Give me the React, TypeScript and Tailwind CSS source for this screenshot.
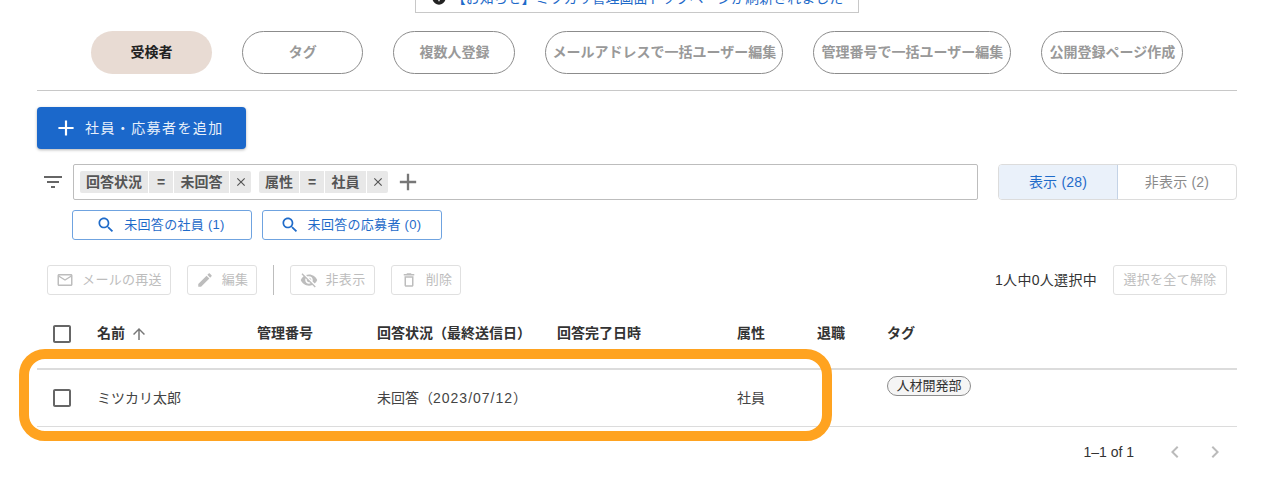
const P = {
  search: "M15.5 14h-.79l-.28-.27C15.41 12.59 16 11.11 16 9.5 16 5.91 13.09 3 9.5 3S3 5.91 3 9.5 5.91 16 9.5 16c1.61 0 3.09-.59 4.23-1.57l.27.28v.79l5 4.99L20.49 19l-4.99-5zm-6 0C7.01 14 5 11.99 5 9.5S7.01 5 9.5 5 14 7.01 14 9.5 11.99 14 9.5 14z",
  mail: "M22 6c0-1.1-.9-2-2-2H4c-1.1 0-2 .9-2 2v12c0 1.1.9 2 2 2h16c1.1 0 2-.9 2-2V6zm-2 0l-8 5-8-5h16zm0 12H4V8l8 5 8-5v10z",
  edit: "M3 17.25V21h3.75L17.81 9.94l-3.75-3.75L3 17.25zM20.71 7.04c.39-.39.39-1.02 0-1.41l-2.34-2.34c-.39-.39-1.02-.39-1.41 0l-1.83 1.83 3.75 3.75 1.83-1.83z",
  eyeOff: "M12 7c2.76 0 5 2.24 5 5 0 .65-.13 1.26-.36 1.83l2.92 2.92c1.51-1.26 2.7-2.89 3.43-4.75-1.73-4.39-6-7.5-11-7.5-1.4 0-2.74.25-3.98.7l2.16 2.16C10.74 7.13 11.35 7 12 7zM2 4.27l2.28 2.28.46.46C3.08 8.3 1.78 10.02 1 12c1.73 4.39 6 7.5 11 7.5 1.55 0 3.03-.3 4.38-.84l.42.42L19.73 22 21 20.73 3.27 3 2 4.27zM7.53 9.8l1.55 1.55c-.05.21-.08.43-.08.65 0 1.66 1.34 3 3 3 .22 0 .44-.03.65-.08l1.55 1.55c-.67.33-1.41.53-2.2.53-2.76 0-5-2.24-5-5 0-.79.2-1.53.53-2.2zm4.31-.78l3.15 3.15.02-.16c0-1.66-1.34-3-3-3l-.17.01z",
  trash: "M6 19c0 1.1.9 2 2 2h8c1.1 0 2-.9 2-2V7H6v12zM8 9h8v10H8V9zm7.5-5l-1-1h-5l-1 1H5v2h14V4z",
  arrowUp: "M4 12l1.41 1.41L11 7.83V20h2V7.83l5.58 5.59L20 12l-8-8-8 8z",
  add: "M19 13h-6v6h-2v-6H5v-2h6V5h2v6h6v2z",
  close: "M19 6.41L17.59 5 12 10.59 6.41 5 5 6.41 10.59 12 5 17.59 6.41 19 12 13.41 17.59 19 19 17.59 13.41 12z",
  left: "M15.41 7.41L14 6l-6 6 6 6 1.41-1.41L10.83 12z",
  right: "M10 6L8.59 7.41 13.17 12l-4.58 4.59L10 18l6-6z",
  filter: "M10 18h4v-2h-4v2zM3 6v2h18V6H3zm3 7h12v-2H6v2z",
  check: "M19 5v14H5V5h14m0-2H5c-1.1 0-2 .9-2 2v14c0 1.1.9 2 2 2h14c1.1 0 2-.9 2-2V5c0-1.1-.9-2-2-2z",
  info: "M12 2C6.48 2 2 6.48 2 12s4.48 10 10 10 10-4.48 10-10S17.52 2 12 2zm1 15h-2v-6h2v6zm0-8h-2V7h2v2z",
};

function Icon({ d, size, className = "" }: { d: string; size: number; className?: string }) {
  return (
    <svg width={size} height={size} viewBox="0 0 24 24" fill="currentColor" className={`shrink-0 ${className}`}>
      <path d={d} />
    </svg>
  );
}

const tabs = [
  { label: "受検者", w: "w-[121px]", active: true },
  { label: "タグ", w: "w-[121.4px]" },
  { label: "複数人登録", w: "w-[122px]" },
  { label: "メールアドレスで一括ユーザー編集", w: "w-[238px]" },
  { label: "管理番号で一括ユーザー編集", w: "w-[198px]" },
  { label: "公開登録ページ作成", w: "w-[142px]" },
];

const cell = "h-[22px] bg-[#e8e8e8] flex items-center justify-center text-[14px] font-bold text-[#555]";

function Chip({ a, aw, b, bw }: { a: string; aw: string; b: string; bw: string }) {
  return (
    <div className="flex gap-px">
      <div className={`${cell} ${aw} rounded-l-[2px]`}>{a}</div>
      <div className={`${cell} w-[24px]`}>=</div>
      <div className={`${cell} ${bw}`}>{b}</div>
      <div className={`${cell} w-[21px] rounded-r-[2px]`}>
        <Icon d={P.close} size={14} />
      </div>
    </div>
  );
}

function DisabledButton({ icon, label, w }: { icon: string; label: string; w: string }) {
  return (
    <div className={`${w} h-[30px] border border-[#e0e0e0] rounded-[3px] flex items-center justify-center gap-[8px] text-[13px] tracking-[0.3px] text-[#bdbdbd]`}>
      <Icon d={icon} size={18} />
      <span>{label}</span>
    </div>
  );
}

function SearchButton({ label }: { label: string }) {
  return (
    <div className="w-[180px] h-[30px] border border-[#6fa3e0] rounded-[3px] flex items-center justify-center gap-[8px] pr-[3px] text-[13px] tracking-[0.3px] text-[#1f6bc9]">
      <Icon d={P.search} size={20} />
      <span>{label}</span>
    </div>
  );
}

const grid = "grid grid-cols-[60px_160px_120px_180px_180px_80px_70px_1fr]";

function CheckBox() {
  return <Icon d={P.check} size={24} className="ml-[13px] text-[#666]" />;
}

export default function App() {
  return (
    <div className="relative w-[1264px] h-[481px] overflow-hidden bg-white pl-[37px] pr-[27px] font-['Liberation_Sans','Noto_Sans_CJK_JP',sans-serif]">
      <div className="ml-[378px] w-[444px] h-[13px] border-x border-b border-[#c8c8c8] overflow-hidden">
        <div className="flex items-center justify-center gap-[5px] h-[18px] -mt-[11px] text-[14px] text-[#1f6bc9] whitespace-nowrap">
          <Icon d={P.info} size={16} className="text-[#222]" />
          <span>【お知らせ】ミツカリ管理画面トップページが刷新されました</span>
        </div>
      </div>

      <div className="mt-[18px] pl-[54px] flex gap-[30px]">
        {tabs.map((t) => (
          <div
            key={t.label}
            className={`${t.w} h-[43px] rounded-[22px] flex items-center justify-center text-[14px] font-bold whitespace-nowrap ${
              t.active ? "bg-[#e8dbd3] text-[#222]" : "border border-[#8c8c8c] text-[#999]"
            }`}
          >
            {t.label}
          </div>
        ))}
      </div>

      <div className="mt-[16px] h-px bg-[#c8c8c8]" />

      <div className="mt-[16px] w-[209px] h-[42px] bg-[#1b68cb] rounded-[4px] shadow-[0_1px_3px_rgba(0,0,0,0.3)] flex items-center pl-[16px] gap-[6px] text-[14px] tracking-[1.4px] text-[#e8f0fa] whitespace-nowrap">
        <Icon d={P.add} size={26} className="text-white" />
        <span>社員・応募者を追加</span>
      </div>

      <div className="mt-[15px] flex items-center">
        <div className="w-[36px] pl-[4px] text-[#666]">
          <Icon d={P.filter} size={24} />
        </div>
        <div className="w-[905px] h-[36px] border border-[#bdbdbd] rounded-[2px] flex items-center pl-[6px] gap-[8px]">
          <Chip a="回答状況" aw="w-[68px]" b="未回答" bw="w-[55px]" />
          <Chip a="属性" aw="w-[40px]" b="社員" bw="w-[41px]" />
          <Icon d={P.add} size={28} className="ml-[-2px] text-[#777]" />
        </div>
        <div className="ml-[20px] flex w-[239px] h-[36px] border border-[#dcdcdc] rounded-[4px] overflow-hidden text-[14px] tracking-[0.2px]">
          <div className="w-[119px] bg-[#eaf1fa] border-r border-[#c4d3e6] text-[#1f6bc9] flex items-center justify-center">表示 (28)</div>
          <div className="flex-1 text-[#8a8a8a] flex items-center justify-center">非表示 (2)</div>
        </div>
      </div>

      <div className="mt-[10px] ml-[35px] flex gap-[10px]">
        <SearchButton label="未回答の社員 (1)" />
        <SearchButton label="未回答の応募者 (0)" />
      </div>

      <div className="mt-[25px] flex items-center px-[10px]">
        <DisabledButton w="w-[124px]" icon={P.mail} label="メールの再送" />
        <div className="w-[16px]" />
        <DisabledButton w="w-[70px]" icon={P.edit} label="編集" />
        <div className="mx-[16px] w-px h-[30px] bg-[#bdbdbd]" />
        <DisabledButton w="w-[85px]" icon={P.eyeOff} label="非表示" />
        <div className="w-[16px]" />
        <DisabledButton w="w-[70px]" icon={P.trash} label="削除" />
        <div className="flex-1" />
        <span className="text-[14px] tracking-[0.3px] text-[#333] mr-[16px]">1人中0人選択中</span>
        <div className="w-[114px] h-[30px] border border-[#e0e0e0] rounded-[3px] flex items-center justify-center text-[13px] tracking-[0.3px] text-[#bdbdbd]">選択を全て解除</div>
      </div>

      <div className={`${grid} mt-[21px] h-[54px] pt-[6px] items-start leading-[23px] text-[14px] font-bold text-[#333] border-b-2 border-[#dcdcdc]`}>
        <CheckBox />
        <div className="flex items-center gap-[5px]">
          名前 <Icon d={P.arrowUp} size={18} className="text-[#777]" />
        </div>
        <div>管理番号</div>
        <div className="whitespace-nowrap">回答状況（最終送信日）</div>
        <div>回答完了日時</div>
        <div>属性</div>
        <div>退職</div>
        <div>タグ</div>
      </div>

      <div className={`${grid} h-[57px] border-b border-[#dcdcdc] text-[14px] text-[#444]`}>
        <div className="self-center"><CheckBox /></div>
        <div className="self-center">ミツカリ太郎</div>
        <div />
        <div className="self-center whitespace-nowrap">
          未回答（<span className="tracking-[1px]">2023/07/12</span>）
        </div>
        <div />
        <div className="self-center">社員</div>
        <div />
        <div className="pt-[5px]">
          <span className="inline-flex items-center h-[20px] px-[8.5px] rounded-full border border-[#8c8c8c] bg-[#f5f5f5] text-[13px] text-[#333]">人材開発部</span>
        </div>
      </div>

      <div className="mt-[15px] h-[20px] flex items-center justify-end pr-[10px] text-[14px] text-[#333]">
        <span>1–1 of 1</span>
        <Icon d={P.left} size={24} className="ml-[29px] text-[#bbb]" />
        <Icon d={P.right} size={24} className="ml-[16px] text-[#bbb]" />
      </div>

      <div className="absolute left-[19px] top-[349px] w-[813px] h-[92px] border-[10px] border-[#ffa320] rounded-[26px] pointer-events-none" />
    </div>
  );
}
